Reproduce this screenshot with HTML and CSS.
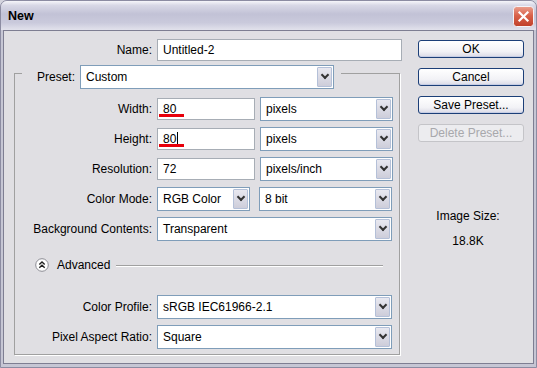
FILE: index.html
```html
<!DOCTYPE html>
<html lang="en">
<head>
  <meta charset="UTF-8">
  <title>New</title>
  <link rel="stylesheet" href="styles.css">
</head>
<body>

  <div class="window">
    <!-- Barra de titulo -->
    <div class="titlebar">
      <span class="title">New</span>
      <span class="close">
        <svg width="21" height="21" viewBox="0 0 21 21">
          <defs>
            <linearGradient id="cg" x1="0" y1="0" x2="0" y2="1">
              <stop offset="0" stop-color="#eba08f"/>
              <stop offset="0.45" stop-color="#d9624a"/>
              <stop offset="1" stop-color="#c0402a"/>
            </linearGradient>
          </defs>
          <rect x="0.5" y="0.5" width="20" height="20" rx="3" fill="url(#cg)" stroke="#f4f4f8"/>
          <path d="M6.5 6.5 L14.5 14.5 M14.5 6.5 L6.5 14.5" stroke="#fff" stroke-width="2.2" stroke-linecap="square"/>
        </svg>
      </span>
    </div>

    <div class="client">
      <!-- Formulario -->
      <div class="form">
        <div class="name-row">
          <label>Name:</label>
          <div class="field">Untitled-2</div>
        </div>

        <div class="group">
          <div class="group-head">
            <label>Preset:</label>
            <div class="select w-preset">Custom<span class="arrow"></span></div>
          </div>

          <div class="rows">
            <label>Width:</label>
            <div class="ctrl">
              <div class="field w-num mark">80</div>
              <div class="select w-unit">pixels<span class="arrow"></span></div>
            </div>

            <label>Height:</label>
            <div class="ctrl">
              <div class="field w-num mark">80<span class="caret"></span></div>
              <div class="select w-unit">pixels<span class="arrow"></span></div>
            </div>

            <label>Resolution:</label>
            <div class="ctrl">
              <div class="field w-num">72</div>
              <div class="select w-unit">pixels/inch<span class="arrow"></span></div>
            </div>

            <label>Color Mode:</label>
            <div class="ctrl">
              <div class="select w-mode">RGB Color<span class="arrow"></span></div>
              <div class="select w-unit">8 bit<span class="arrow"></span></div>
            </div>

            <label>Background Contents:</label>
            <div class="ctrl">
              <div class="select w-full">Transparent<span class="arrow"></span></div>
            </div>
          </div>

          <div class="advanced">
            <svg class="adv-icon" width="14" height="14" viewBox="0 0 14 14">
              <circle cx="7" cy="7" r="6.3" fill="#fff" stroke="#8c8c94"/>
              <path d="M4.3 6.6 L7 4 L9.7 6.6 M4.3 9.8 L7 7.2 L9.7 9.8" fill="none" stroke="#222" stroke-width="1.4"/>
            </svg>
            <span>Advanced</span>
            <span class="line"></span>
          </div>

          <div class="rows rows-adv">
            <label>Color Profile:</label>
            <div class="ctrl">
              <div class="select w-full">sRGB IEC61966-2.1<span class="arrow"></span></div>
            </div>

            <label>Pixel Aspect Ratio:</label>
            <div class="ctrl">
              <div class="select w-full">Square<span class="arrow"></span></div>
            </div>
          </div>
        </div>
      </div>

      <!-- Botones -->
      <div class="side">
        <button class="btn">OK</button>
        <button class="btn">Cancel</button>
        <button class="btn">Save Preset...</button>
        <button class="btn" disabled>Delete Preset...</button>
        <div class="info">
          <p>Image Size:</p>
          <p class="size">18.8K</p>
        </div>
      </div>
    </div>
  </div>

</body>
</html>
```

FILE: styles.css
```css
* {
  margin: 0;
  padding: 0;
  box-sizing: border-box;
}

body, html {
  width: 100%;
  height: 100%;
  overflow: hidden;
  background: #d4d4de;
  font-family: 'Liberation Sans', Arial, sans-serif;
  font-size: 12px;
  color: #000;
}

.window {
  width: 537px;
  height: 368px;
  display: flex;
  flex-direction: column;
  background: #c6c6d4;
  border: 1px solid #8c8ca2;
  border-radius: 7px 7px 0 0;
  padding: 0 2px 3px;
}

/* Barra de titulo */
.titlebar {
  height: 29px;
  margin: 0 -2px;
  padding: 1px 2px 0 7px;
  display: flex;
  align-items: center;
  border-radius: 6px 6px 0 0;
  background: linear-gradient(to bottom, #f6f6fa 0%, #d8d8e6 15%, #c2c2d6 45%, #cacadc 75%, #e2e2ec 100%);
}

.title {
  font-weight: bold;
  font-size: 12.5px;
}

.close {
  margin-left: auto;
  display: flex;
}

.client {
  flex: 1;
  display: flex;
  border: 1px solid #7e7e92;
  background: #e0dfe3;
}

.form {
  width: 397px;
  padding: 8px 0 0 10px;
}

label {
  text-align: right;
  white-space: nowrap;
}

.name-row {
  display: grid;
  grid-template-columns: 138px 245px;
  column-gap: 5px;
  align-items: center;
}

.field {
  position: relative;
  height: 22px;
  border: 1px solid #a7adb5;
  background: #fff;
  padding: 0 5px;
  display: flex;
  align-items: center;
}

/* subrayado rojo */
.field.mark::after {
  content: "";
  position: absolute;
  left: 1px;
  bottom: 2px;
  width: 25px;
  height: 3px;
  background: #e8000b;
}

.caret {
  width: 1px;
  height: 14px;
  margin-left: 1px;
  background: #000;
}

.select {
  height: 24px;
  border: 1px solid #7f9db9;
  background: #fff;
  padding-left: 5px;
  display: flex;
  align-items: center;
  white-space: nowrap;
}

.select .arrow {
  margin-left: auto;
  margin-right: 1px;
  width: 15px;
  height: 20px;
  border: 1px solid #b4c0d8;
  border-radius: 1px;
  background: linear-gradient(to bottom, #e8e8f0, #cdcdda);
  display: flex;
  align-items: center;
  justify-content: center;
}

.select .arrow::before {
  content: "";
  width: 4px;
  height: 4px;
  border-right: 2px solid #333;
  border-bottom: 2px solid #333;
  transform: translateY(-2px) rotate(45deg);
}

.w-preset { width: 254px; }
.w-num { width: 98px; }
.w-unit { width: 133px; }
.w-mode { width: 93px; margin-right: 4px; }
.w-full { width: 235px; }

/* Grupo preset */
.group {
  width: 386px;
  margin-top: 12px;
  padding-bottom: 5px;
  border: 1px solid #a0a0a0;
  box-shadow: 1px 1px 0 #fff;
}

.group-head {
  width: max-content;
  margin: -9px 0 0 7px;
  padding: 0 7px 0 15px;
  display: flex;
  align-items: center;
  gap: 5px;
  background: #e0dfe3;
}

.rows {
  display: grid;
  grid-template-columns: 137px auto;
  column-gap: 5px;
  row-gap: 6px;
  align-items: center;
  margin-top: 8px;
}

.rows-adv {
  margin-top: 21px;
}

.ctrl {
  display: flex;
  align-items: center;
  gap: 5px;
}

.advanced {
  height: 18px;
  margin: 15px 16px 0 20px;
  display: flex;
  align-items: center;
}

.adv-icon {
  margin-right: 8px;
}

.advanced .line {
  flex: 1;
  margin-left: 6px;
  border-top: 1px solid #a0a0a0;
  box-shadow: 0 1px 0 #fff;
}

/* Columna derecha */
.side {
  flex: 1;
  padding: 9px 0 0 17px;
  display: flex;
  flex-direction: column;
}

.btn {
  width: 106px;
  height: 18px;
  margin-bottom: 10px;
  border: 1px solid #1c3f78;
  border-radius: 3px;
  background: linear-gradient(to bottom, #ffffff, #f2f2f6 65%, #dadae6);
  box-shadow: inset 0 -1px 0 #c6cde4;
  font-family: inherit;
  font-size: 12px;
  color: #000;
}

.btn:disabled {
  border-color: #c4c4c8;
  background: #ececef;
  box-shadow: none;
  color: #a8a8ac;
}

.info {
  width: 100px;
  margin-top: 57px;
  text-align: center;
  line-height: 14px;
}

.info .size {
  margin-top: 11px;
}
```
